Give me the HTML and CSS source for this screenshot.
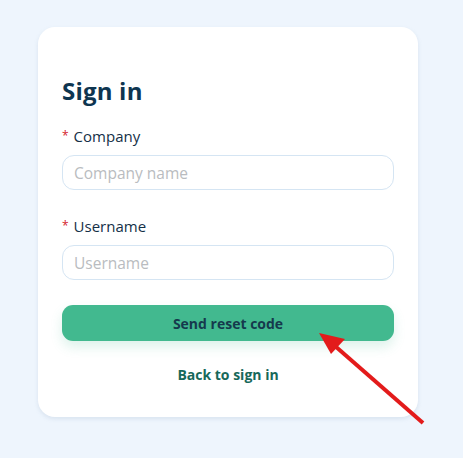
FILE: index.html
```html
<!DOCTYPE html>
<html>
<head>
<meta charset="utf-8">
<link rel="stylesheet" href="styles.css">
</head>
<body>
<div class="page">
  <div class="card">
    <h1 class="title">Sign in</h1>
    <div class="field">
      <label class="label"><span class="req">*</span>Company</label>
      <input class="input" type="text" placeholder="Company name">
    </div>
    <div class="field">
      <label class="label"><span class="req">*</span>Username</label>
      <input class="input" type="text" placeholder="Username">
    </div>
    <button class="btn">Send reset code</button>
    <a class="back">Back to sign in</a>
  </div>
  <svg class="arrow" width="463" height="458" viewBox="0 0 463 458">
    <line x1="423" y1="423" x2="335" y2="346" stroke="#e31b1b" stroke-width="4"/>
    <polygon points="319,333 345,339 331,354" fill="#e31b1b"/>
  </svg>
</div>
</body>
</html>
```

FILE: styles.css
```css
html, body {
  margin: 0;
  padding: 0;
  background: #eef5fd;
}
body {
  font-family: "Open Sans", "Noto Sans", sans-serif;
  width: 463px;
  height: 458px;
  overflow: hidden;
}
.page {
  position: relative;
  padding: 27px 0 0 38px;
}
.card {
  box-sizing: border-box;
  width: 380px;
  height: 390px;
  background: #fff;
  border-radius: 17px;
  box-shadow: 0 2px 4px rgba(120, 150, 180, 0.18);
  padding: 48px 24px 0 24px;
  display: flex;
  flex-direction: column;
}
.title {
  margin: 0 0 19px 0;
  font-size: 24px;
  line-height: 32px;
  font-weight: 700;
  color: #0e3550;
  letter-spacing: 0.2px;
}
.field {
  display: flex;
  flex-direction: column;
  gap: 9px;
}
.field + .field {
  margin-top: 26px;
}
.label {
  font-size: 15px;
  line-height: 20px;
  color: #142f47;
  display: flex;
  align-items: center;
}
.req {
  color: #d4202a;
  font-size: 12px;
  margin-right: 5px;
}
.input {
  box-sizing: border-box;
  height: 35px;
  width: 332px;
  border: 1px solid #d5e5f3;
  border-radius: 12px;
  padding: 0 11px;
  font-family: inherit;
  font-size: 15.5px;
  color: #142f47;
  background: #fff;
  outline: none;
}
.input::placeholder {
  color: #b9bcc0;
}
.btn {
  margin-top: 25px;
  height: 36px;
  width: 332px;
  border: none;
  border-radius: 11px;
  background: #42b98f;
  color: #15394d;
  font-family: inherit;
  font-size: 14px;
  font-weight: 700;
  box-shadow: 0 6px 12px rgba(66, 185, 143, 0.18);
}
.back {
  margin-top: 24px;
  line-height: 20px;
  text-align: center;
  font-size: 14px;
  font-weight: 700;
  color: #17685a;
}
.arrow {
  position: absolute;
  left: 0;
  top: 0;
  pointer-events: none;
}
```
